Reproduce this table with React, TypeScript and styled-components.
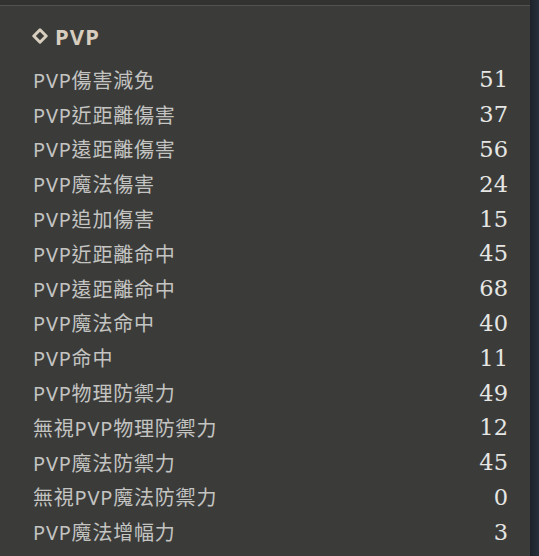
import React from 'react';
import styled, {createGlobalStyle} from 'styled-components';

const GlobalStyle = createGlobalStyle`
  html, body {
    margin: 0;
    padding: 0;
    background: #3a3b39;
  }
  body {
    width: 539px;
    height: 556px;
    overflow: hidden;
  }
`;

const Screen = styled.div`
  display: flex;
  width: 539px;
  height: 556px;
`;

const Panel = styled.div`
  flex: 1;
  display: flex;
  flex-direction: column;
  background: #3b3c3a;
  border-top: 5px solid #323331;
`;

const TopLine = styled.div`
  height: 1px;
  background: #52534f;
`;

const EdgeStrip = styled.div`
  width: 9px;
  background: linear-gradient(90deg, #1d222a, #26303c);
`;

const Header = styled.h3`
  display: flex;
  align-items: center;
  gap: 7px;
  margin: 18px 0 0;
  padding-left: 32px;
  height: 24px;
  font-family: 'Noto Sans', 'Noto Sans CJK TC', sans-serif;
  font-size: 22px;
  font-weight: 700;
  letter-spacing: 1.2px;
  color: #d8cebf;
`;

const List = styled.div`
  display: flex;
  flex-direction: column;
  margin-top: 14px;
  padding: 0 22px 0 33px;
`;

const Row = styled.div`
  display: flex;
  justify-content: space-between;
  align-items: center;
  height: 34.8px;
`;

const Label = styled.span`
  font-family: 'Noto Sans', 'Noto Sans CJK TC', sans-serif;
  font-size: 20px;
  letter-spacing: 0.8px;
  color: #c4c4c2;
`;

const Value = styled.span`
  font-family: 'DejaVu Serif', 'Liberation Serif', serif;
  font-size: 22.5px;
  color: #e6e6e4;
`;

const stats: [string, number][] = [
    ['PVP傷害減免', 51],
    ['PVP近距離傷害', 37],
    ['PVP遠距離傷害', 56],
    ['PVP魔法傷害', 24],
    ['PVP追加傷害', 15],
    ['PVP近距離命中', 45],
    ['PVP遠距離命中', 68],
    ['PVP魔法命中', 40],
    ['PVP命中', 11],
    ['PVP物理防禦力', 49],
    ['無視PVP物理防禦力', 12],
    ['PVP魔法防禦力', 45],
    ['無視PVP魔法防禦力', 0],
    ['PVP魔法增幅力', 3],
];

const Diamond = () => (
    <svg width="16" height="16" viewBox="0 0 16 16">
        <path d="M8 1.8 L14.2 8 L8 14.2 L1.8 8 Z" fill="none" stroke="#d8cebf" strokeWidth="3"
              strokeLinejoin="round"/>
    </svg>
);

export default function App() {
    return (
        <Screen>
            <GlobalStyle/>
            <Panel>
                <TopLine/>
                <Header>
                    <Diamond/>
                    PVP
                </Header>
                <List>
                    {stats.map(([name, value]) => <Row key={name}>
                        <Label>{name}</Label>
                        <Value>{value}</Value>
                    </Row>)}
                </List>
            </Panel>
            <EdgeStrip/>
        </Screen>
    );
}
